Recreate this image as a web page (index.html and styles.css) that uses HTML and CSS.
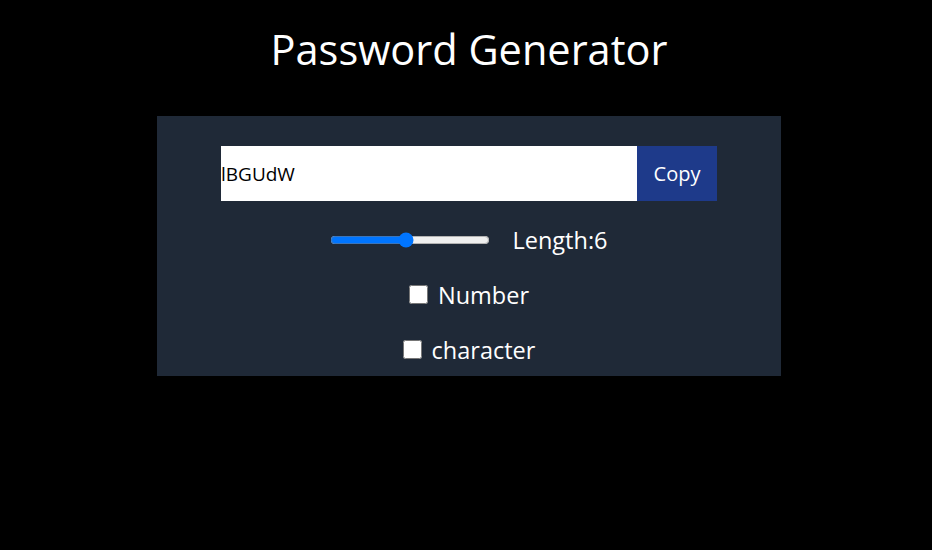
FILE: index.html
```html
<!DOCTYPE html>
<html lang="en">
<head>
<meta charset="utf-8">
<title>Password Generator</title>
<link rel="stylesheet" href="styles.css">
</head>
<body>
<main class="page">
  <h1 class="title">Password Generator</h1>
  <section class="card">
    <div class="field-row">
      <input class="password" type="text" value="lBGUdW" readonly>
      <button class="copy-btn" type="button">Copy</button>
    </div>
    <div class="option-row first">
      <input class="range" type="range" min="0" max="100" value="47">
      <label class="option-label">Length:6</label>
    </div>
    <div class="option-row">
      <input class="check" type="checkbox" id="num">
      <label class="option-label" for="num">Number</label>
    </div>
    <div class="option-row">
      <input class="check" type="checkbox" id="chr">
      <label class="option-label" for="chr">character</label>
    </div>
  </section>
</main>
</body>
</html>
```
FILE: styles.css
```css
* { box-sizing: border-box; }
html, body { margin: 0; padding: 0; background: #000; }
body {
  font-family: "Open Sans", "Noto Sans", sans-serif;
  color: #fff;
  width: 932px;
  height: 550px;
  overflow: hidden;
}
.page {
  display: flex;
  flex-direction: column;
  align-items: center;
  padding-left: 6px;
}
.title {
  margin: 0;
  padding-top: 22px;
  font-size: 41.5px;
  font-weight: 400;
  line-height: 54px;
}
.card {
  margin-top: 40px;
  width: 624px;
  height: 260px;
  background: #1f2937;
  padding-top: 30px;
  display: flex;
  flex-direction: column;
  align-items: center;
}
.field-row {
  display: flex;
  height: 55px;
}
.password {
  width: 416px;
  height: 55px;
  border: 0;
  padding: 0;
  margin: 0;
  font-family: inherit;
  font-size: 19px;
  color: #000;
  background: #fff;
  outline: none;
}
.copy-btn {
  width: 80px;
  height: 55px;
  border: 0;
  margin: 0;
  background: #1e3a8a;
  color: #fff;
  font-family: inherit;
  font-size: 20px;
}
.option-row {
  display: flex;
  align-items: center;
  height: 55px;
  gap: 10px;
  flex-shrink: 0;
}
.option-row.first {
  margin-top: 11px;
}
.range {
  width: 160px;
  margin: 0 12px 0 0;
}
.check {
  width: 19px;
  height: 19px;
  margin: 0;
}
.option-label {
  font-size: 23.5px;
}
```
